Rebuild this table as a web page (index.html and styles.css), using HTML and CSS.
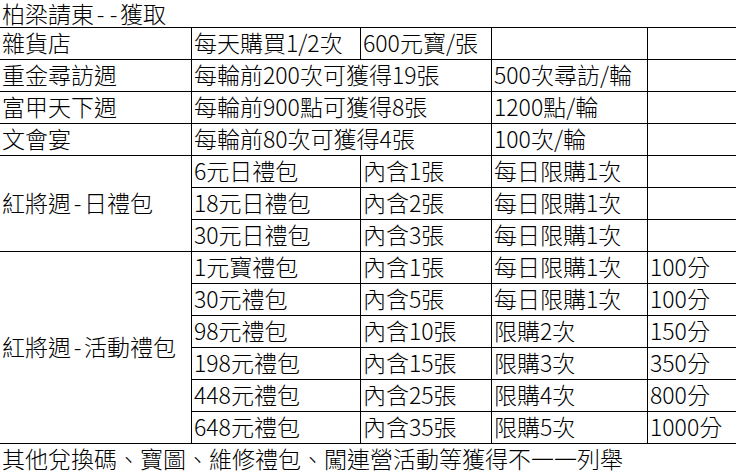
FILE: index.html
```html
<!DOCTYPE html>
<html lang="zh-Hant">
<head>
<meta charset="utf-8">
<title>柏梁請東--獲取</title>
<link rel="stylesheet" href="styles.css">
</head>
<body>
<table class="sheet">
  <colgroup>
    <col class="c1"><col class="c2"><col class="c3"><col class="c4"><col class="c5">
  </colgroup>
  <tr><td colspan="5" class="title">柏梁請東<span class="dash">-</span><span class="dash">-</span>獲取</td></tr>
  <tr>
    <td>雜貨店</td><td>每天購買1/2次</td><td>600元寶/張</td><td></td><td class="last"></td>
  </tr>
  <tr>
    <td>重金尋訪週</td><td colspan="2">每輪前200次可獲得19張</td><td>500次尋訪/輪</td><td class="last"></td>
  </tr>
  <tr>
    <td>富甲天下週</td><td colspan="2">每輪前900點可獲得8張</td><td>1200點/輪</td><td class="last"></td>
  </tr>
  <tr>
    <td>文會宴</td><td colspan="2">每輪前80次可獲得4張</td><td>100次/輪</td><td class="last"></td>
  </tr>
  <tr>
    <td rowspan="3">紅將週<span class="dash">-</span>日禮包</td><td>6元日禮包</td><td>內含1張</td><td>每日限購1次</td><td class="last"></td>
  </tr>
  <tr>
    <td>18元日禮包</td><td>內含2張</td><td>每日限購1次</td><td class="last"></td>
  </tr>
  <tr>
    <td>30元日禮包</td><td>內含3張</td><td>每日限購1次</td><td class="last"></td>
  </tr>
  <tr>
    <td rowspan="6">紅將週<span class="dash">-</span>活動禮包</td><td>1元寶禮包</td><td>內含1張</td><td>每日限購1次</td><td class="last">100分</td>
  </tr>
  <tr>
    <td>30元禮包</td><td>內含5張</td><td>每日限購1次</td><td class="last">100分</td>
  </tr>
  <tr>
    <td>98元禮包</td><td>內含10張</td><td>限購2次</td><td class="last">150分</td>
  </tr>
  <tr>
    <td>198元禮包</td><td>內含15張</td><td>限購3次</td><td class="last">350分</td>
  </tr>
  <tr>
    <td>448元禮包</td><td>內含25張</td><td>限購4次</td><td class="last">800分</td>
  </tr>
  <tr>
    <td>648元禮包</td><td>內含35張</td><td>限購5次</td><td class="last">1000分</td>
  </tr>
  <tr><td colspan="5" class="footer">其他兌換碼、寶圖、維修禮包、闖連營活動等獲得不一一列舉</td></tr>
</table>
</body>
</html>
```
FILE: styles.css
```css
html, body {
  margin: 0;
  padding: 0;
  background: #ffffff;
}

.sheet {
  width: 736px;
  table-layout: fixed;
  border-collapse: separate;
  border-spacing: 0;
  font-family: "Noto Sans CJK TC", "Noto Sans CJK SC", "Noto Sans", sans-serif;
  font-size: 23px;
  font-weight: 300;
  color: #000000;
}

.c1 { width: 192px; }
.c2 { width: 169px; }
.c3 { width: 131px; }
.c4 { width: 156px; }
.c5 { width: 88px; }

.sheet td {
  box-sizing: border-box;
  padding: 0 0 2px 2px;
  line-height: 29px;
  vertical-align: middle;
  white-space: nowrap;
  border-right: 1px solid #000;
  border-bottom: 1px solid #000;
}

.sheet td.last {
  border-right: none;
}

.sheet td.title {
  border-right: none;
  line-height: 26px;
  padding: 0 0 1px 2px;
}

.sheet td.footer {
  border: none;
  line-height: 29px;
  padding: 0 0 2px 2px;
}

.dash {
  display: inline-block;
  width: 13px;
  text-align: center;
}
```
